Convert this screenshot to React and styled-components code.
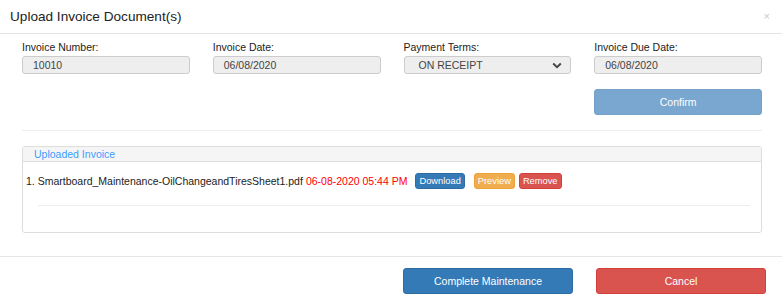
import React from "react";
import styled, { createGlobalStyle } from "styled-components";

const GlobalStyle = createGlobalStyle`
  body {
    margin: 0;
    background: #fff;
    font-family: "Liberation Sans", Arial, sans-serif;
    color: #333;
  }
  * { box-sizing: border-box; }
`;

const Modal = styled.div`
  width: 782px;
  height: 298px;
  background: #fff;
`;

const Header = styled.div`
  height: 34px;
  display: flex;
  align-items: center;
  justify-content: space-between;
  padding: 0 10px 1px 10px;
  border-bottom: 1px solid #e5e5e5;
`;

const Title = styled.h4`
  margin: 0;
  font-size: 13.6px;
  font-weight: normal;
  color: #222;
`;

const Close = styled.span`
  font-size: 11px;
  color: #c8c8c8;
  margin-right: 2px;
`;

const Body = styled.div`
  padding: 6px 20px 0 22px;
`;

const FormGrid = styled.div`
  display: grid;
  grid-template-columns: repeat(4, 1fr);
  column-gap: 23px;
  width: 740px;
`;

const Field = styled.div`
  display: flex;
  flex-direction: column;
`;

const Label = styled.label`
  font-size: 10.5px;
  line-height: 14px;
  color: #222;
  margin-bottom: 2px;
`;

const Input = styled.div`
  height: 18px;
  background: #eee;
  border: 1px solid #ccc;
  border-radius: 3px;
  font-size: 10.5px;
  color: #444;
  display: flex;
  align-items: center;
  justify-content: space-between;
  padding: 0 8px 0 ${(p) => (p.select ? "14px" : "10px")};
`;

const ConfirmCell = styled.div`
  grid-column: 4;
  margin-top: 15px;
`;

const Button = styled.button`
  width: ${(p) => p.width || "100%"};
  height: ${(p) => p.height || "26px"};
  border-radius: 3px;
  border: 1px solid ${(p) => p.border};
  background: ${(p) => p.bg};
  color: #fff;
  font-family: "Liberation Sans", Arial, sans-serif;
  font-size: 10.5px;
  padding: 0;
  cursor: pointer;
`;

const Divider = styled.div`
  margin-top: 15px;
  height: 1px;
  width: 740px;
  background: #eee;
`;

const Panel = styled.div`
  margin-top: 15px;
  width: 740px;
  border: 1px solid #ddd;
  border-radius: 3px;
  padding-bottom: 26px;
`;

const PanelHeading = styled.div`
  background: #f5f5f5;
  border-bottom: 1px solid #ddd;
  font-size: 10.5px;
  line-height: 14px;
  color: #3d9cff;
  padding-left: 11px;
`;

const ItemRow = styled.div`
  margin-top: 11px;
  height: 16px;
  display: flex;
  align-items: center;
  padding-left: 3px;
  font-size: 10.5px;
  color: #222;
  white-space: pre;
`;

const Stamp = styled.span`
  color: #f00;
  margin-left: 3px;
  margin-right: 8px;
`;

const SmallBtn = styled.button`
  height: 16px;
  padding: 0 3px;
  margin-left: ${(p) => p.gap || "0px"};
  border-radius: 3px;
  border: 1px solid ${(p) => p.border};
  background: ${(p) => p.bg};
  color: #fff;
  font-family: "Liberation Sans", Arial, sans-serif;
  font-size: 9.3px;
  line-height: 14px;
`;

const InnerRule = styled.div`
  margin: 16px 11px 0 15px;
  height: 1px;
  background: #eee;
`;

const Footer = styled.div`
  margin-top: 23px;
  border-top: 1px solid #e5e5e5;
  padding: 11px 16px 0 0;
  display: flex;
  justify-content: flex-end;
  gap: 23px;
`;

const Chevron = () => (
  <svg width="10" height="7" viewBox="0 0 10 7">
    <path d="M1.2 1.5 L5 5.2 L8.8 1.5" fill="none" stroke="#444" strokeWidth="1.9" />
  </svg>
);

const fields = [
  { label: "Invoice Number:", value: "10010" },
  { label: "Invoice Date:", value: "06/08/2020" },
  { label: "Payment Terms:", value: "ON RECEIPT", select: true },
  { label: "Invoice Due Date:", value: "06/08/2020" },
];

export default function App() {
  return (
    <>
      <GlobalStyle />
      <Modal>
        <Header>
          <Title>Upload Invoice Document(s)</Title>
          <Close>×</Close>
        </Header>
        <Body>
          <FormGrid>
            {fields.map((f) => (
              <Field key={f.label}>
                <Label>{f.label}</Label>
                <Input select={f.select}>
                  <span>{f.value}</span>
                  {f.select && <Chevron />}
                </Input>
              </Field>
            ))}
            <ConfirmCell>
              <Button bg="#7aa7cf" border="#73a1ca">
                Confirm
              </Button>
            </ConfirmCell>
          </FormGrid>
          <Divider />
          <Panel>
            <PanelHeading>Uploaded Invoice</PanelHeading>
            <ItemRow>
              1. Smartboard_Maintenance-OilChangeandTiresSheet1.pdf
              <Stamp>06-08-2020 05:44 PM</Stamp>
              <SmallBtn bg="#337ab7" border="#2e6da4">Download</SmallBtn>
              <SmallBtn bg="#f0ad4e" border="#eea236" gap="9px">Preview</SmallBtn>
              <SmallBtn bg="#d9534f" border="#d43f3a" gap="4px">Remove</SmallBtn>
            </ItemRow>
            <InnerRule />
          </Panel>
        </Body>
        <Footer>
          <Button width="170px" bg="#337ab7" border="#2e6da4">
            Complete Maintenance
          </Button>
          <Button width="170px" bg="#d9534f" border="#d43f3a">
            Cancel
          </Button>
        </Footer>
      </Modal>
    </>
  );
}
